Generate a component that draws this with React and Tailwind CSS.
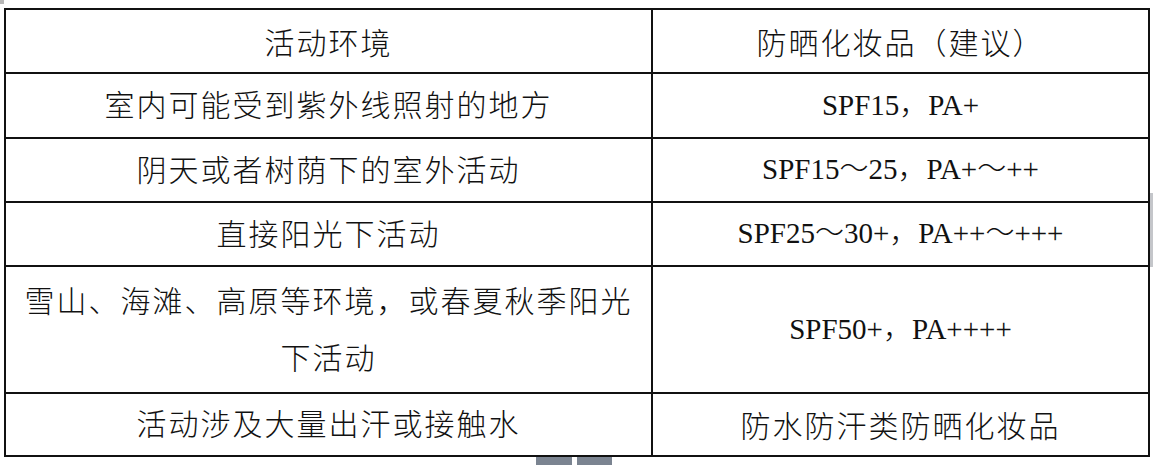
const rows = [
  { env: '室内可能受到紫外线照射的地方', spf: 'SPF15，PA+', h: 'h-[65px]' },
  { env: '阴天或者树荫下的室外活动', spf: 'SPF15～25，PA+～++', h: 'h-[64px]' },
  { env: '直接阳光下活动', spf: 'SPF25～30+，PA++～+++', h: 'h-[64px]' },
  { env: '雪山、海滩、高原等环境，或春夏秋季阳光下活动', spf: 'SPF50+，PA++++', h: 'h-[127px]' },
  { env: '活动涉及大量出汗或接触水', spf: '防水防汗类防晒化妆品', h: 'h-[63px]', cjk: true }
]

const cjk = { fontFamily: '"Noto Sans CJK SC", sans-serif' }
const latin = { fontFamily: '"Liberation Serif", "Noto Sans CJK SC", serif' }

export default function App() {
  return (
    <div className="relative w-[1153px] h-[465px] bg-white overflow-hidden pt-2 pl-1">
      <table className="w-[1144px] border-collapse border-2 border-[#111] text-[#111] table-fixed">
        <colgroup>
          <col className="w-[647px]" />
          <col className="w-[497px]" />
        </colgroup>
        <tbody>
          <tr className="h-[64px]">
            <td className="border-2 border-[#111] text-center text-[30px] font-light tracking-[2px]" style={cjk}>活动环境</td>
            <td className="border-2 border-[#111] text-center text-[30px] font-light tracking-[2px]" style={cjk}>防晒化妆品（建议）</td>
          </tr>
          {rows.map((r) => (
            <tr key={r.env} className={r.h}>
              <td className="border-2 border-[#111] text-center px-4 pb-1 text-[30px] leading-[57px] font-light tracking-[2px]" style={cjk}>
                {r.env}
              </td>
              {r.cjk ? (
                <td className="border-2 border-[#111] text-center text-[30px] font-light tracking-[2px]" style={cjk}>{r.spf}</td>
              ) : (
                <td className="border-2 border-[#111] text-center text-[29px] font-light" style={latin}>{r.spf}</td>
              )}
            </tr>
          ))}
        </tbody>
      </table>
      {/* bits of the surrounding page that show around the table */}
      <div className="absolute left-0 top-0 w-[4px] h-[4px] bg-[#b8b8b8]" />
      <div className="absolute right-0 top-[193px] w-[3px] h-[74px] bg-[#c4c6ca]" />
      <div className="absolute left-[536px] top-[457px] w-[36px] h-[8px] bg-[#7b8491]" />
      <div className="absolute left-[577px] top-[457px] w-[35px] h-[8px] bg-[#7b8491]" />
    </div>
  )
}
